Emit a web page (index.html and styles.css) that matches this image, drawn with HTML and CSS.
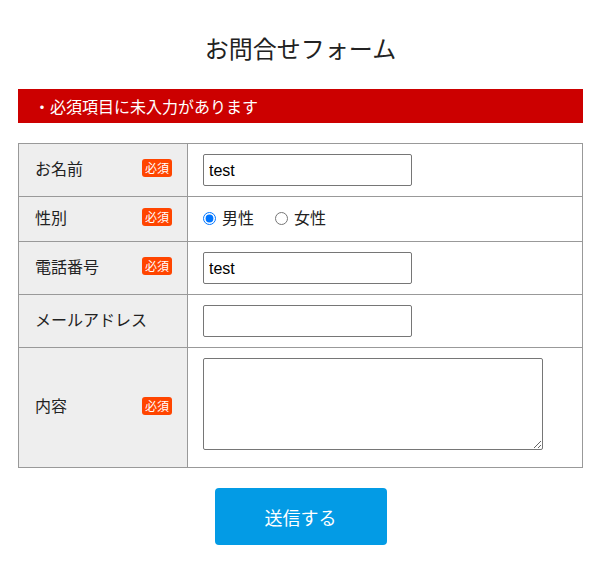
FILE: index.html
```html
<!DOCTYPE html>
<html lang="ja">
<head>
<meta charset="utf-8">
<title>お問合せフォーム</title>
<link rel="stylesheet" href="styles.css">
</head>
<body>
<div class="page">
  <h1 class="title">お問合せフォーム</h1>
  <div class="error">・必須項目に未入力があります</div>
  <form class="form">
    <table class="form-table">
      <tr>
        <th><div class="head"><span class="label">お名前</span><span class="req">必須</span></div></th>
        <td><input class="text" type="text" value="test"></td>
      </tr>
      <tr>
        <th><div class="head"><span class="label">性別</span><span class="req">必須</span></div></th>
        <td>
          <div class="radios">
            <label class="radio"><input type="radio" name="sex" checked>男性</label>
            <label class="radio"><input type="radio" name="sex">女性</label>
          </div>
        </td>
      </tr>
      <tr>
        <th><div class="head"><span class="label">電話番号</span><span class="req">必須</span></div></th>
        <td><input class="text" type="text" value="test"></td>
      </tr>
      <tr>
        <th><div class="head"><span class="label">メールアドレス</span></div></th>
        <td><input class="text" type="text" value=""></td>
      </tr>
      <tr>
        <th><div class="head"><span class="label">内容</span><span class="req">必須</span></div></th>
        <td><textarea class="area"></textarea></td>
      </tr>
    </table>
    <div class="actions"><button class="submit" type="button">送信する</button></div>
  </form>
</div>
</body>
</html>
```
FILE: styles.css
```css
html, body {
  margin: 0;
  padding: 0;
  background: #fff;
}
body {
  font-family: "Noto Sans CJK JP", "Liberation Sans", sans-serif;
  color: #333;
}
.page {
  margin: 0 20px 0 18px;
}
.title {
  margin: 30px 0 23px;
  font-size: 24px;
  line-height: 36px;
  font-weight: normal;
  text-align: center;
  color: #222;
}
.error {
  background: #cc0000;
  color: #fff;
  font-size: 16px;
  line-height: 24px;
  padding: 5px 16px;
}
.form {
  margin-top: 20px;
}
.form-table {
  width: 100%;
  border-collapse: collapse;
  table-layout: fixed;
}
.form-table th,
.form-table td {
  border: 1px solid #999;
  vertical-align: middle;
}
.form-table th {
  width: 137px;
  background: #eee;
  font-weight: normal;
  text-align: left;
  padding: 0 15px 0 16px;
  font-size: 16px;
  white-space: nowrap;
}
.head {
  display: flex;
  align-items: center;
  justify-content: space-between;
  line-height: 24px;
}
.label {
  display: block;
  padding-bottom: 5px;
  color: #222;
}
.form-table td {
  padding: 10px 15px;
  font-size: 16px;
  color: #222;
}
.req {
  display: block;
  background: #ff4500;
  color: #fff;
  font-size: 12px;
  line-height: 18px;
  height: 18px;
  padding: 0 3px;
  border-radius: 3px;
  margin-bottom: 4px;
}
.text {
  display: block;
  box-sizing: border-box;
  width: 209px;
  height: 32px;
  margin: 0;
  padding: 1px 5px 0;
  border: 1px solid #767676;
  border-radius: 2px;
  font-family: "Liberation Sans", sans-serif;
  font-size: 16px;
  color: #000;
}
.radios {
  display: flex;
  align-items: center;
  box-sizing: border-box;
  height: 24px;
  padding-bottom: 4px;
  line-height: 20px;
}
.radio {
  display: flex;
  align-items: center;
  margin-right: 21px;
}
.radio input {
  width: 13px;
  height: 13px;
  margin: 2px 6px 0 0;
}
.area {
  display: block;
  box-sizing: border-box;
  width: 340px;
  height: 92px;
  margin: 0 0 7px;
  border: 1px solid #767676;
  border-radius: 2px;
}
.actions {
  display: flex;
  justify-content: center;
  margin-top: 20px;
}
.submit {
  width: 172px;
  height: 57px;
  border: none;
  border-radius: 4px;
  background: #039be5;
  color: #fff;
  font-family: "Noto Sans CJK JP", sans-serif;
  font-size: 18px;
}
```
